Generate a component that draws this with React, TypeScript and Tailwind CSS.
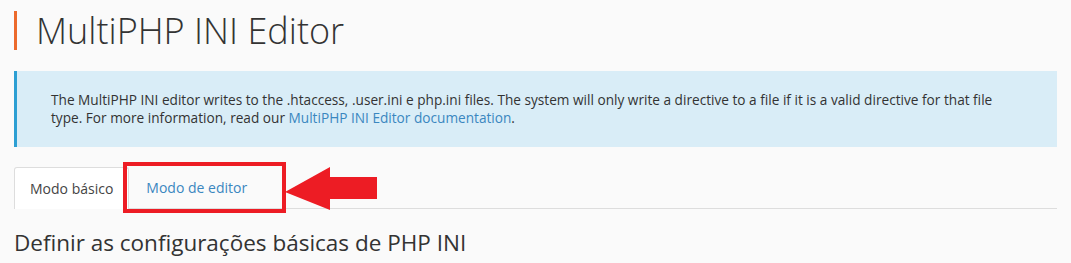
import React from 'react';

export default function App() {
  return (
    <div
      className="min-h-[263px] w-full bg-[#fafafa] px-[14px] text-[#333]"
      style={{ fontFamily: '"Open Sans", "Liberation Sans", sans-serif' }}
    >
      {/* page header */}
      <div className="flex items-center pt-[11px]">
        <div className="h-[39px] w-[3px] bg-[#ec6a2c]" />
        <h1 className="ml-[19px] text-[36px] font-light leading-none text-[#333]">MultiPHP INI Editor</h1>
      </div>

      {/* info callout */}
      <div className="mt-[21px] border-l-[3px] border-[#2c9fd3] bg-[#d9edf7] py-[20px] pl-[34px] pr-[40px] text-[13.65px] leading-[18px] text-[#333]">
        The MultiPHP INI editor writes to the .htaccess, .user.ini e php.ini files. The system will only write a
        directive to a file if it is a valid directive for that file type. For more information, read our{' '}
        <a href="#" className="text-[#3a87c0]">
          MultiPHP INI Editor documentation
        </a>
        .
      </div>

      {/* tabs */}
      <div className="relative mt-[20px]">
        <div className="flex border-b border-[#ddd]">
          <div className="-mb-px flex h-[42px] items-center rounded-t-[3px] border border-b-0 border-[#ddd] bg-white px-[15px] text-[14px] text-[#444]">
            Modo básico
          </div>
          <div className="flex h-[41px] items-center px-[17px] text-[14px] text-[#3a87c0]">Modo de editor</div>
        </div>

        {/* annotation */}
        <div className="pointer-events-none absolute left-[109px] top-[-5px] h-[51px] w-[163px] border-[4px] border-[#ed1c24]" />
        <svg
          className="pointer-events-none absolute left-[271px] top-0"
          width="93"
          height="44"
          viewBox="0 0 93 44"
        >
          <path d="M0 25 L45 0 L45 10 L92 10 L92 32 L45 32 L45 43 Z" fill="#ed1c24" strokeLinejoin="round" />
        </svg>
      </div>

      <h2 className="mt-[19px] text-[22.5px] font-normal leading-[30px] text-[#333]">
        Definir as configurações básicas de PHP INI
      </h2>
    </div>
  );
}
